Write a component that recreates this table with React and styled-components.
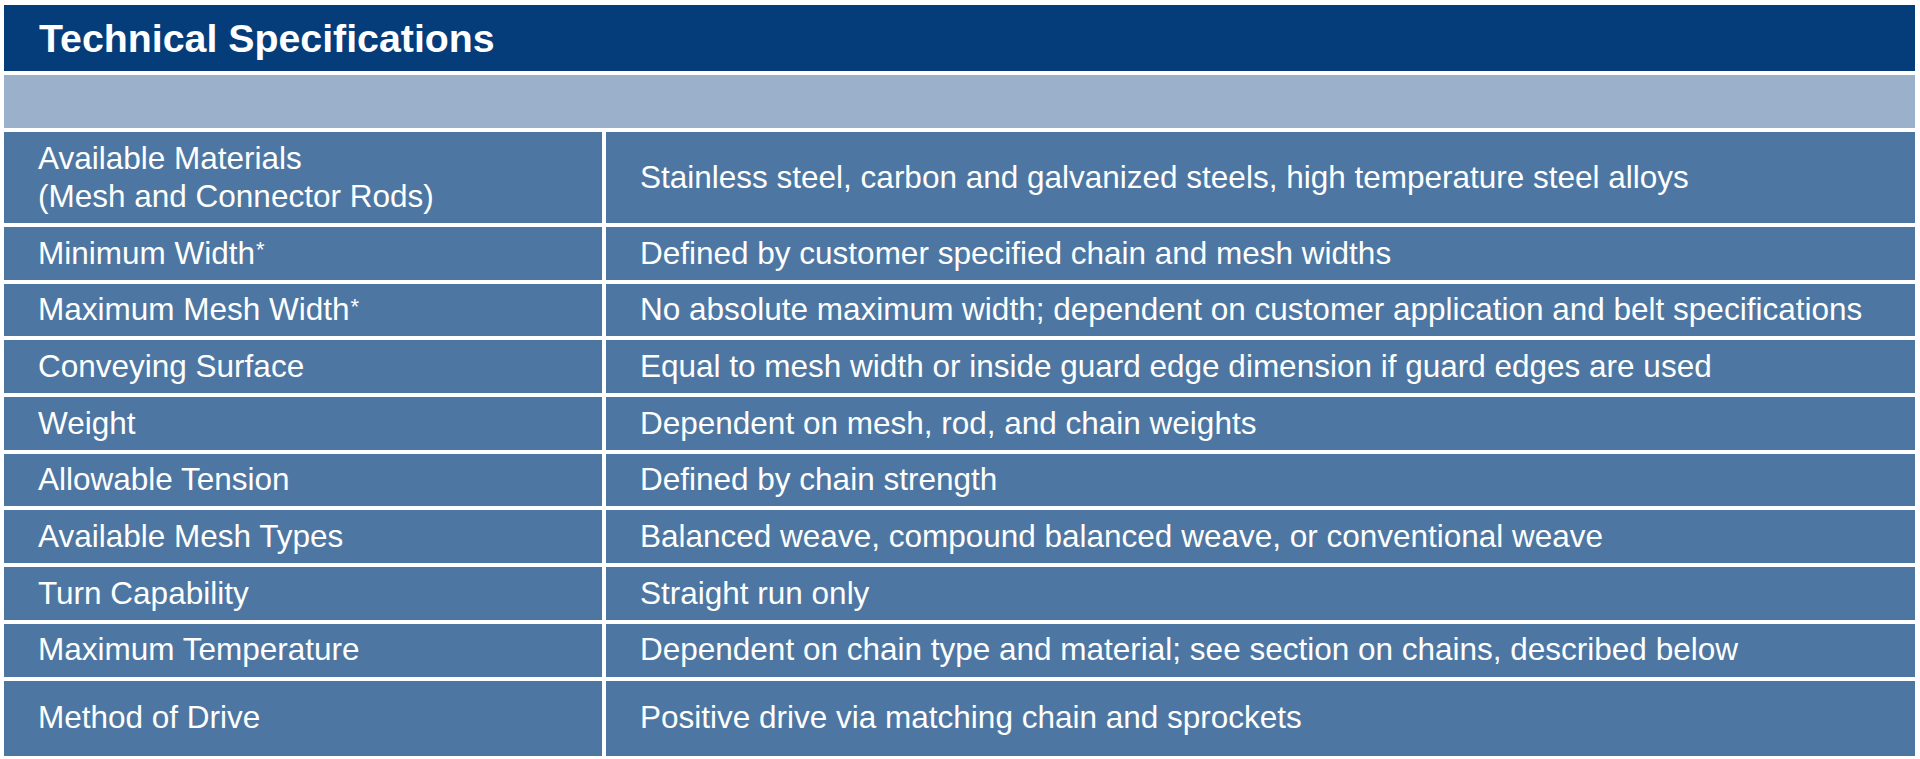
import React from "react";
import styled, { createGlobalStyle } from "styled-components";

const Global = createGlobalStyle`
  html, body { margin: 0; padding: 0; background: #ffffff; }
  body { font-family: "Liberation Sans", Arial, Helvetica, sans-serif; }
`;

const Page = styled.div`
  padding: 5px 5px 0 4px;
  width: 1911px;
`;

const Table = styled.div`
  display: flex;
  flex-direction: column;
  gap: 4px;
`;

const TitleBar = styled.div`
  height: 66px;
  background: #053d7b;
  display: flex;
  align-items: center;
  padding-left: 35px;
  box-sizing: border-box;
`;

const Title = styled.h1`
  margin: 0;
  color: #ffffff;
  font-family: "Liberation Sans", Arial, Helvetica, sans-serif;
  font-weight: 700;
  font-size: 39.3px;
  line-height: 1;
  padding-top: 1px;
`;

const Band = styled.div`
  height: 53px;
  background: #9bb1cb;
`;

const Row = styled.div`
  display: grid;
  grid-template-columns: 598px 1fr;
  gap: 4px;
  height: ${(p) => p.$h}px;
`;

const Cell = styled.div`
  background: #4d77a2;
  color: #ffffff;
  font-family: "Liberation Sans", Arial, Helvetica, sans-serif;
  font-size: 31.5px;
  line-height: 37.5px;
  display: flex;
  align-items: center;
  padding-left: 34px;
  box-sizing: border-box;
  white-space: nowrap;
`;

const Star = styled.span`
  font-size: 0.7em;
  vertical-align: 0.3em;
  line-height: 0;
  margin-left: 1px;
`;

const rows = [
  { label: ["Available Materials", "(Mesh and Connector Rods)"], value: "Stainless steel, carbon and galvanized steels, high temperature steel alloys", h: 91 },
  { label: ["Minimum Width"], star: true, value: "Defined by customer specified chain and mesh widths", h: 52.7 },
  { label: ["Maximum Mesh Width"], star: true, value: "No absolute maximum width; dependent on customer application and belt specifications", h: 52.7 },
  { label: ["Conveying Surface"], value: "Equal to mesh width or inside guard edge dimension if guard edges are used", h: 52.7 },
  { label: ["Weight"], value: "Dependent on mesh, rod, and chain weights", h: 52.7 },
  { label: ["Allowable Tension"], value: "Defined by chain strength", h: 52.7 },
  { label: ["Available Mesh Types"], value: "Balanced weave, compound balanced weave, or conventional weave", h: 52.7 },
  { label: ["Turn Capability"], value: "Straight run only", h: 52.7 },
  { label: ["Maximum Temperature"], value: "Dependent on chain type and material; see section on chains, described below", h: 52.7 },
  { label: ["Method of Drive"], value: "Positive drive via matching chain and sprockets", h: 75 },
];

export default function App() {
  return (
    <>
      <Global />
      <Page>
        <Table>
          <TitleBar>
            <Title>Technical Specifications</Title>
          </TitleBar>
          <Band />
          {rows.map((r, i) => (
            <Row key={i} $h={r.h}>
              <Cell>
                <div>
                  {r.label.map((l, j) => (
                    <div key={j}>
                      {l}
                      {r.star && <Star>*</Star>}
                    </div>
                  ))}
                </div>
              </Cell>
              <Cell>{r.value}</Cell>
            </Row>
          ))}
        </Table>
      </Page>
    </>
  );
}
